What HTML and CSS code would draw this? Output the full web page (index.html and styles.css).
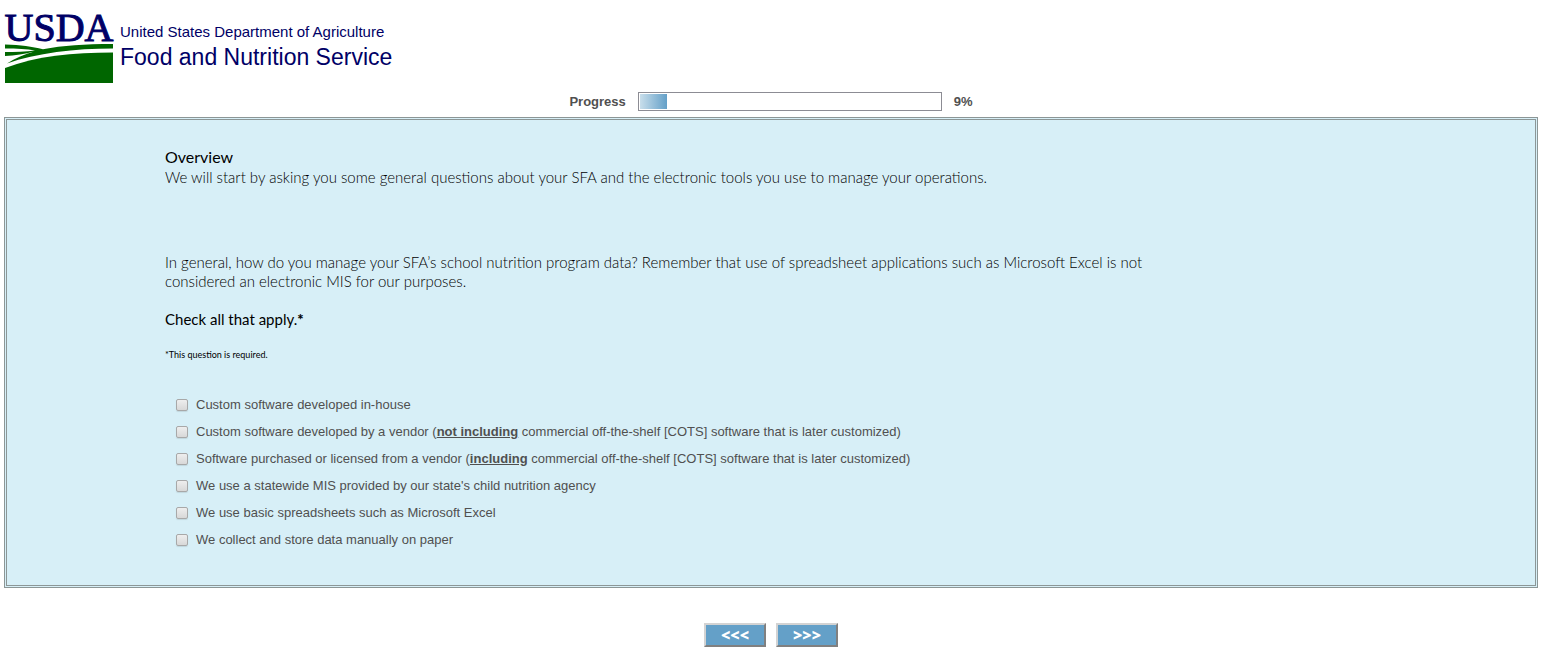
FILE: index.html
```html
<!DOCTYPE html>
<html lang="en">
<head>
    <meta charset="UTF-8">
    <meta name="viewport" content="width=device-width, initial-scale=1.0">
    <title>Food and Nutrition Service Survey</title>
    <link rel="stylesheet" href="styles.css">
</head>
<body>
    <header class="header">
        <svg class="logo" viewBox="0 0 108 75" role="img" aria-label="USDA">
            <text class="logo-text" x="54" y="33" text-anchor="middle">USDA</text>
            <path fill="#006600" d="M0 36.500 C16 37 27 38.500 38 41.300 C58 37.500 79 36 108 36 V40.500 C70 40.500 31 45 2 55.500 C10 50 20 46 29 43.500 C20 46 10 47.500 0 48 V44 C10 44 21 43.500 30 42.500 C22 41 12 40.500 0 40.500 Z"/>
            <path fill="#006600" d="M0 60 C31 48 68 44.500 108 44.500 V75 H0 Z"/>
        </svg>
        <div class="agency">
            <div class="department">United States Department of Agriculture</div>
            <div class="service">Food and Nutrition Service</div>
        </div>
    </header>

    <form class="survey">
        <div class="progress">
            <span id="progress_label">Progress</span>
            <div class="progress-bar" role="progressbar" aria-labelledby="progress_label" aria-valuemin="0" aria-valuemax="100" aria-valuenow="9">
                <div class="progress-fill" style="width: 9%"></div>
            </div>
            <span>9%</span>
        </div>

        <main class="panel">
            <div class="content">
                <h1>Overview</h1>
                <p class="intro">We will start by asking you some general questions about your SFA and the electronic tools you use to manage your operations.</p>

                <p class="question">In general, how do you manage your SFA’s school nutrition program data? Remember that use of spreadsheet applications such as Microsoft Excel is not considered an electronic MIS for our purposes.</p>
                <h2 id="check_all">Check all that apply.<strong>*</strong></h2>
                <p class="required">*This question is required.</p>

                <div class="options" role="group" aria-labelledby="check_all">
                    <div class="option">
                        <input type="checkbox" id="opt_inhouse">
                        <label for="opt_inhouse">Custom software developed in-house</label>
                    </div>
                    <div class="option">
                        <input type="checkbox" id="opt_vendor">
                        <label for="opt_vendor">Custom software developed by a vendor (<b>not including</b> commercial off-the-shelf [COTS] software that is later customized)</label>
                    </div>
                    <div class="option">
                        <input type="checkbox" id="opt_cots">
                        <label for="opt_cots">Software purchased or licensed from a vendor (<b>including</b> commercial off-the-shelf [COTS] software that is later customized)</label>
                    </div>
                    <div class="option">
                        <input type="checkbox" id="opt_state">
                        <label for="opt_state">We use a statewide MIS provided by our state's child nutrition agency</label>
                    </div>
                    <div class="option">
                        <input type="checkbox" id="opt_excel">
                        <label for="opt_excel">We use basic spreadsheets such as Microsoft Excel</label>
                    </div>
                    <div class="option">
                        <input type="checkbox" id="opt_paper">
                        <label for="opt_paper">We collect and store data manually on paper</label>
                    </div>
                </div>
            </div>
        </main>

        <div class="buttons">
            <button type="button" aria-label="Previous">&lt;&lt;&lt;</button>
            <button type="button" aria-label="Next">&gt;&gt;&gt;</button>
        </div>
    </form>
</body>
</html>
```
FILE: styles.css
```css
* {
    margin: 0;
    padding: 0;
    box-sizing: border-box;
}

body {
    font-family: "Liberation Sans", Arial, sans-serif;
    font-size: 13px;
    color: #505050;
    background-color: #fff;
    padding: 8px 10px 16px 4px;
}
.header {
    display: flex;
    gap: 7px;
    padding-left: 1px;
    color: #000066;
}
.logo {
    width: 108px;
    height: 75px;
    overflow: visible;
}
.logo-text {
    font-family: "Liberation Serif", "Times New Roman", serif;
    font-size: 40px;
    fill: #000066;
    stroke: #000066;
    stroke-width: 1px;
}
.agency {
    padding-top: 14px;
}
.department {
    font-size: 15px;
    line-height: 20px;
}
.service {
    font-size: 23px;
    line-height: 30px;
}
.progress {
    display: flex;
    justify-content: center;
    align-items: center;
    gap: 12px;
    padding: 9px 0 6px;
    font-weight: bold;
}
.progress-bar {
    width: 304px;
    height: 19px;
    padding: 1px;
    border: 1px solid #8c8c94;
    background-color: #fff;
}
.progress-fill {
    height: 100%;
    background: linear-gradient(to right, #c8deeb, #64a0c8);
}
.panel {
    border: 3px double #8c9696;
    background-color: #d7eff7;
    padding: 26px 158px 32px;
}
.content {
    max-width: 1000px;
    font-family: Lato, Calibri, sans-serif;
    color: #000;
}
h1 {
    font-size: 16px;
    font-weight: normal;
    line-height: 22px;
}
.intro, .question {
    font-size: 15px;
    font-weight: 300;
    line-height: 19px;
}
.question {
    margin-top: 66px;
}
h2 {
    margin-top: 19px;
    font-size: 15px;
    font-weight: normal;
    line-height: 19px;
}
h2 strong {
    font-weight: 900;
}
.required {
    margin-top: 19px;
    font-size: 9px;
    font-weight: normal;
    line-height: 14px;
}
.options {
    margin-top: 29px;
    padding-left: 11px;
    font-family: "Liberation Sans", Arial, sans-serif;
    color: #505050;
}
.option {
    display: flex;
    align-items: center;
    gap: 8px;
    min-height: 27px;
}
.option b {
    text-decoration: underline;
}
.option input {
    appearance: none;
    flex: none;
    width: 12px;
    height: 12px;
    border: 1px solid #a8a8a8;
    border-radius: 2px;
    background: linear-gradient(#eee, #d8d8d8);
    box-shadow: 0 1px 1px rgba(0, 0, 0, 0.1);
}
.option input:checked {
    background: #64a0c8;
}
.buttons {
    display: flex;
    justify-content: center;
    gap: 10px;
    padding-top: 35px;
}
button {
    width: 62px;
    height: 24px;
    border: 2px solid;
    border-color: #d3d3d3 #808080 #808080 #d3d3d3;
    background-color: #64a0c8;
    color: #fff;
    font-family: "Open Sans", sans-serif;
    font-size: 16px;
    font-weight: 800;
    line-height: 18px;
    cursor: pointer;
}
```
